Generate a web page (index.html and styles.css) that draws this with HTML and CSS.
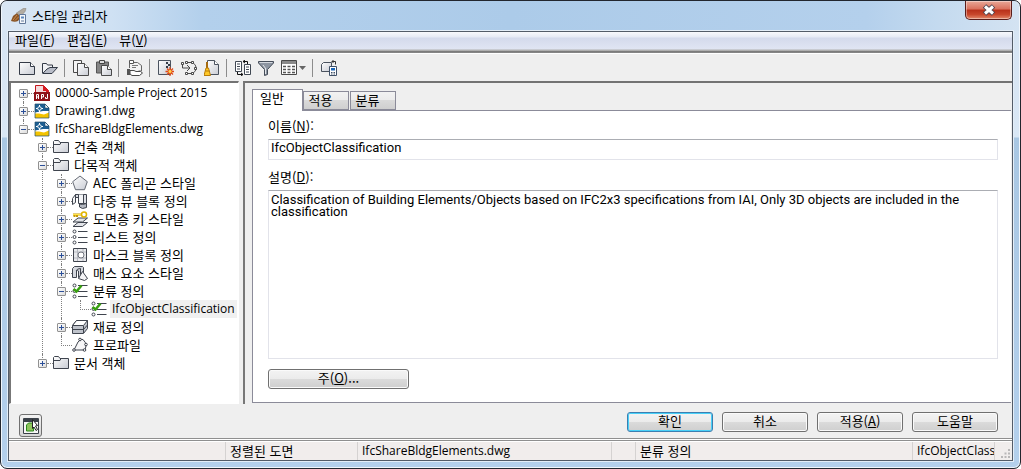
FILE: index.html
```html
<!DOCTYPE html>
<html lang="ko">
<head>
<meta charset="utf-8">
<title>스타일 관리자</title>
<link rel="stylesheet" href="styles.css">
</head>
<body>
<svg class="defs" aria-hidden="true">
  <defs>
    <linearGradient id="paper" x1="0" y1="0" x2="1" y2="1"><stop offset="0" stop-color="#fff"/><stop offset="1" stop-color="#c9ccd4"/></linearGradient>
    <symbol id="i-folder" viewBox="0 0 16 16"><path d="M.5 13.500v-11l1-1h4l1.500 2h8.500v10z" fill="url(#paper)" stroke="#3f444e"/><path d="M1 5.500h6l1-2" fill="none" stroke="#3f444e"/></symbol>
    <symbol id="i-dwg" viewBox="0 0 16 16"><path d="M1 1h10l4 4v10H1z" fill="#f3c300"/><path d="M1 1h10l4 4v5H1z" fill="#1d5f92"/><path d="M1 10.500l4 0 5 1 5-2v-1.500l-6 0-8 1.500z" fill="#fff"/><path d="M11 1l4 4h-4z" fill="#fff" stroke="#1b4568" stroke-width=".6"/><path d="M5.500 2v7M2 5.500h7" stroke="#fff"/><circle cx="5.500" cy="5.500" r="1.800" fill="#1d5f92" stroke="#fff"/><path d="M1 1h10l4 4v10H1z" fill="none" stroke="#26516f" stroke-width=".7"/></symbol>
    <symbol id="i-apj" viewBox="0 0 16 16"><path d="M1.500.500h8l5 5V8h-13z" fill="#f3d9da" stroke="#c4161c"/><path d="M9 0l6 6v2h-3V6H9z" fill="#d71920"/><path d="M0 7h16v9H0z" fill="#8e1218"/><path d="M2.500 14V9.500h2V14M2.500 12h2M7.500 14V9.500h2V12h-2M13.500 9v4.500h-2V12" fill="none" stroke="#fff"/></symbol>
    <symbol id="i-poly" viewBox="0 0 16 16"><path d="M8 1l7.300 5.700-2.800 8h-9L.7 6.700z" fill="url(#paper)" stroke="#666b75"/></symbol>
    <symbol id="i-multi" viewBox="0 0 16 16"><path d="M3.500 1.500h11v9h-4v-6h-7z" fill="#dcdfe5" stroke="#3f444e"/><path d="M3.500 1.500L.5 5.500v6l3-2zM6.500 1.500v9h5v-9" fill="#f4f5f7" stroke="#3f444e"/><path d="M7.500 11v3l3 1.500 4-1v-4l-4 1z" fill="#b4b8c1" stroke="#3f444e"/></symbol>
    <symbol id="i-key" viewBox="0 0 16 16"><path d="M1 15.500l5-4h9.500l-5 4zM1 11l5-4h9.500l-5 4z" fill="#e2e4e8" stroke="#3f444e"/><path d="M1 3.500h9M2.500 4v2M5 4v2" stroke="#c79a00" stroke-width="2"/><path d="M1 3.500h9" stroke="#ffe24a"/><circle cx="12" cy="3.500" r="2.500" fill="#fff" stroke="#e0b400" stroke-width="1.500"/></symbol>
    <symbol id="i-list" viewBox="0 0 16 16"><path d="M6 2.500h9.500M6 8.500h9.500M6 13.500h9.500" stroke="#3f444e"/><g fill="#fff" stroke="#3f444e"><circle cx="2.500" cy="2.500" r="1.500"/><circle cx="2.500" cy="8" r="1.500"/><circle cx="2.500" cy="13.500" r="1.500"/></g></symbol>
    <symbol id="i-mask" viewBox="0 0 16 16"><path d="M1.500 1.500h13v13h-13z" fill="#e8e9ec" stroke="#3f444e"/><path d="M2 5h12M2 11h12M5.500 2v12M11 2v12" stroke="#b7bac1"/><circle cx="9" cy="8" r="3" fill="#fff" stroke="#70747d"/></symbol>
    <symbol id="i-mass" viewBox="0 0 16 16"><path d="M.5 3.500l2-2h8l1 1v5l-3 5H6.500V6Q6 5 4.500 6v6.500h-4z" fill="#d4d7dd" stroke="#3f444e"/><path d="M4 6q1-2.500 4.500-2.500V11" fill="none" stroke="#3f444e"/><path d="M10.500 6.500l5 7-3 2-6-2z" fill="#f4f4f6" stroke="#3f444e"/></symbol>
    <symbol id="i-class" viewBox="0 0 16 16"><use href="#i-list"/><path d="M1.500 6l3 2.500 5-6" fill="none" stroke="#38a010" stroke-width="2.500"/></symbol>
    <symbol id="i-mat" viewBox="0 0 16 16"><path d="M.5 6.500l4-5h11v8l-4 5H.5z" fill="#bfc3cb" stroke="#3f444e"/><path d="M.5 6.500l4-5h11l-4 5z" fill="#fff" stroke="#3f444e"/><path d="M1 10.500h10.500l4-4.500M11.500 7v7" fill="none" stroke="#3f444e"/></symbol>
    <symbol id="i-prof" viewBox="0 0 16 16"><path d="M2 13L6 5q3-4 5-2.500Q14 5 14 9l-1 4z" fill="#f6f6f7" stroke="#3f444e"/><g fill="#fff" stroke="#3f444e"><circle cx="2" cy="13" r="1.300"/><circle cx="8" cy="2.500" r="1.300"/><circle cx="14" cy="7.500" r="1.300"/><circle cx="12.500" cy="13" r="1.300"/></g></symbol>
  </defs>
</svg>

<div class="window">
  <header class="titlebar">
    <svg class="ico" viewBox="0 0 16 16"><path d="M0 13l2-5 4-3 4 4-3 4q-3 1.500-7 0z" fill="#8a5527"/><path d="M2 12l4-5M4 12.500l4-4" stroke="#c98b4e"/><path d="M5.500 5L13 0l2 .5-1 3L10 8z" fill="#b3aca2" stroke="#8a8378" stroke-width=".6"/><path d="M8.500 6.500h6v9h-6z" fill="#f4f7fb" stroke="#62789a"/><path d="M10 8.500h3v2h-3z" fill="#5b86bd"/><path d="M10 13h3" stroke="#62789a"/></svg>
    <h1>스타일 관리자</h1>
    <button class="close" type="button" aria-label="닫기"><svg width="14" height="12" viewBox="0 0 14 12"><path d="M2.500 2l9 8M11.500 2l-9 8" stroke="#4d4450" stroke-width="5"/><path d="M3 2.500l8 7M11 2.500l-8 7" stroke="#fff" stroke-width="3"/></svg></button>
  </header>

  <div class="client">
    <nav class="menubar">
      <button type="button">파일(<u>F</u>)</button>
      <button type="button">편집(<u>E</u>)</button>
      <button type="button">뷰(<u>V</u>)</button>
    </nav>

    <div class="toolbar" role="toolbar">
      <button type="button" aria-label="새 도면"><svg class="ico" viewBox="0 0 16 16"><path d="M.5 2.500h11l4 4v8H.5z" fill="url(#paper)" stroke="#343b47"/><path d="M11.500 2.500v4h4" fill="#fff" stroke="#343b47"/></svg></button>
      <button type="button" aria-label="열기"><svg class="ico" viewBox="0 0 16 16"><path d="M.5 13V3.500h4l1 1.500h5v2.500" fill="#f2f3f5" stroke="#343b47"/><path d="M.7 13.500L5 9l3-1.500h7.500L10 13.500z" fill="#b9bdc8" stroke="#343b47"/></svg></button>
      <i class="sep"></i>
      <button type="button" aria-label="복사"><svg class="ico" viewBox="0 0 16 16"><path d="M.5.500h8v12h-8z" fill="#f5f5f5" stroke="#4a4a4a"/><path d="M4.500 3.500h7l4 4v8h-11z" fill="url(#paper)" stroke="#4a4a4a"/><path d="M11.500 3.500v4h4" fill="#fff" stroke="#4a4a4a"/></svg></button>
      <button type="button" aria-label="붙여넣기"><svg class="ico" viewBox="0 0 16 16"><path d="M.5 2h12v11H.5z" fill="#858585" stroke="#555"/><path d="M3.500.500h5v3h-5z" fill="#ddd" stroke="#444"/><path d="M5.500 5.500h6l4 4v6h-10z" fill="url(#paper)" stroke="#4a4a4a"/><path d="M11.500 5.500v4h4" fill="#fff" stroke="#4a4a4a"/></svg></button>
      <i class="sep"></i>
      <button type="button" aria-label="공유"><svg class="ico" viewBox="0 0 16 16"><path d="M2.500 8V2.500h8l4 3V11h-3" fill="#f2f2f2" stroke="#666"/><path d="M2.500.500h4v3h-4z" fill="#fff" stroke="#555"/><path d="M5 5.500h6M5 7.500h4" stroke="#777"/><path d="M3 10.500h4l2 1h4.500l2 1.500-3 2.500H5L3 14z" fill="#fff" stroke="#4a4a4a"/><path d="M0 9h3v6H0z" fill="#555"/></svg></button>
      <i class="sep"></i>
      <button type="button" aria-label="새 스타일"><svg class="ico" viewBox="0 0 16 16"><path d="M.5.500h12v14H.5z" fill="url(#paper)" stroke="#4b535f"/><path d="M8 2h2v2H8zM10 4h2v2h-2zM8 6h2v2H8z" fill="#333b47"/><path d="M12 7v9M7.500 11.500h9M9 8.500l6 6M15 8.500l-6 6" stroke="#e04a1a" stroke-width="1.300"/><circle cx="12" cy="11.500" r="2" fill="#ffd54a" stroke="#e04a1a" stroke-width=".8"/></svg></button>
      <button type="button" aria-label="스타일 편집"><svg class="ico" viewBox="0 0 16 16"><path d="M5 2.500h5q5 1 5 5.500t-5 5.500H5M1.500 4v4h7M6 5l3 3-3 3" fill="none" stroke="#4a4a4a"/><g fill="#fff" stroke="#4a4a4a"><path d="M4.500 1.500h2v2h-2zM10.500 1.500h2v2h-2zM13.500 7.500h2v2h-2zM10.500 12.500h2v2h-2zM4.500 12.500h2v2h-2zM.5 2.500h2v2h-2z"/></g></svg></button>
      <button type="button" aria-label="소거"><svg class="ico" viewBox="0 0 16 16"><path d="M3.500.500h7l4 4v10h-11z" fill="url(#paper)" stroke="#4b535f"/><path d="M10.500.500v4h4" fill="#fff" stroke="#4b535f"/><path d="M3 2v6" stroke="#a56a10" stroke-width="2"/><path d="M2 8h2.500l2 7.500H0z" fill="#ffc928" stroke="#b87b08"/><path d="M1.500 11h4" stroke="#b87b08"/></svg></button>
      <i class="sep"></i>
      <button type="button" aria-label="비교"><svg class="ico" viewBox="0 0 16 16"><path d="M.5 1.500h6v10h-6zM9.500 4.500h6v10h-6z" fill="#fff" stroke="#3f4752"/><path d="M2 4h3M2 6.500h3M2 9h3M11 7h3M11 9.500h3M11 12h3" stroke="#3f4752"/><path d="M8 1.500h4.500V4M10 0L8 1.500 10 3M2.500 12v2.500H8M6 13l2 1.500L6 16" fill="none" stroke="#111"/></svg></button>
      <button type="button" aria-label="필터"><svg class="ico" viewBox="0 0 16 16"><path d="M.5 1.500h15v1.500l-6 6.500v5l-3 1V9.500L.5 3z" fill="#8d95a1" stroke="#454d59"/><path d="M1.500 2.500h13" stroke="#d5d9df"/><path d="M7.500 8v6M5 5l3 4" stroke="#e3e6ea"/></svg></button>
      <button type="button" class="split" aria-label="보기"><svg class="ico" viewBox="0 0 16 16"><path d="M.5.500h15v14H.5z" fill="#fff" stroke="#4a4a4a"/><path d="M1 1h14v3H1z" fill="#8a8a8a"/><path d="M2 6.500h12M2 9.500h12M2 12.500h12" stroke="#555" stroke-width="1.500" stroke-dasharray="3 1.500"/></svg><svg class="arrow" viewBox="0 0 7 4"><path d="M0 0h7L3.500 4z" fill="#666"/></svg></button>
      <i class="sep"></i>
      <button type="button" aria-label="삽입"><svg class="ico" viewBox="0 0 16 16"><path d="M.5 4.500l2-2h8v9H.5z" fill="url(#paper)" stroke="#4b535f"/><path d="M8.500 6.500h7v9h-7z" fill="#fff" stroke="#3f5068"/><path d="M10 8h4v2.500h-4z" fill="#1a66b8"/><path d="M10 12.500h4M10 14h4" stroke="#3f5068" stroke-dasharray="1 .5"/><path d="M11 1.500h3.500v3M12.500 0L11 1.500 12.500 3" fill="none" stroke="#333"/></svg></button>
    </div>

    <main class="panes">
      <ul class="tree" role="tree">
        <li><div class="row"><button class="exp" type="button" aria-label="펼치기"></button><svg class="ico"><use href="#i-apj"/></svg><span class="label latin">00000-Sample Project 2015</span></div></li>
        <li><div class="row"><button class="exp" type="button" aria-label="펼치기"></button><svg class="ico"><use href="#i-dwg"/></svg><span class="label latin">Drawing1.dwg</span></div></li>
        <li><div class="row"><button class="exp open" type="button" aria-label="접기"></button><svg class="ico"><use href="#i-dwg"/></svg><span class="label latin">IfcShareBldgElements.dwg</span></div>
          <ul>
            <li><div class="row"><button class="exp" type="button" aria-label="펼치기"></button><svg class="ico"><use href="#i-folder"/></svg><span class="label">건축 객체</span></div></li>
            <li><div class="row"><button class="exp open" type="button" aria-label="접기"></button><svg class="ico"><use href="#i-folder"/></svg><span class="label">다목적 객체</span></div>
              <ul>
                <li><div class="row"><button class="exp" type="button" aria-label="펼치기"></button><svg class="ico"><use href="#i-poly"/></svg><span class="label">AEC 폴리곤 스타일</span></div></li>
                <li><div class="row"><button class="exp" type="button" aria-label="펼치기"></button><svg class="ico"><use href="#i-multi"/></svg><span class="label">다중 뷰 블록 정의</span></div></li>
                <li><div class="row"><button class="exp" type="button" aria-label="펼치기"></button><svg class="ico"><use href="#i-key"/></svg><span class="label">도면층 키 스타일</span></div></li>
                <li><div class="row"><button class="exp" type="button" aria-label="펼치기"></button><svg class="ico"><use href="#i-list"/></svg><span class="label">리스트 정의</span></div></li>
                <li><div class="row"><button class="exp" type="button" aria-label="펼치기"></button><svg class="ico"><use href="#i-mask"/></svg><span class="label">마스크 블록 정의</span></div></li>
                <li><div class="row"><button class="exp" type="button" aria-label="펼치기"></button><svg class="ico"><use href="#i-mass"/></svg><span class="label">매스 요소 스타일</span></div></li>
                <li><div class="row"><button class="exp open" type="button" aria-label="접기"></button><svg class="ico"><use href="#i-class"/></svg><span class="label">분류 정의</span></div>
                  <ul>
                    <li><div class="row leaf"><svg class="ico"><use href="#i-class"/></svg><span class="label latin selected">IfcObjectClassification</span></div></li>
                  </ul>
                </li>
                <li><div class="row"><button class="exp" type="button" aria-label="펼치기"></button><svg class="ico"><use href="#i-mat"/></svg><span class="label">재료 정의</span></div></li>
                <li><div class="row leaf"><svg class="ico"><use href="#i-prof"/></svg><span class="label">프로파일</span></div></li>
              </ul>
            </li>
            <li><div class="row"><button class="exp" type="button" aria-label="펼치기"></button><svg class="ico"><use href="#i-folder"/></svg><span class="label">문서 객체</span></div></li>
          </ul>
        </li>
      </ul>

      <section class="detail">
        <div class="tabs" role="tablist">
          <button type="button" role="tab" class="tab active" aria-selected="true">일반</button>
          <button type="button" role="tab" class="tab">적용</button>
          <button type="button" role="tab" class="tab">분류</button>
        </div>
        <div class="page" role="tabpanel">
          <label for="name">이름(<u>N</u>):</label>
          <input id="name" type="text" value="IfcObjectClassification">
          <label for="desc">설명(<u>D</u>):</label>
          <textarea id="desc">Classification of Building Elements/Objects based on IFC2x3 specifications from IAI, Only 3D objects are included in the classification</textarea>
          <button type="button" class="btn notes">주(<u>O</u>)...</button>
        </div>
      </section>
    </main>

    <footer class="actions">
      <button type="button" class="viewer" aria-label="뷰어"><svg class="ico" viewBox="0 0 16 16"><path d="M.5.500h15v15H.5z" fill="#f7f7f5" stroke="#3a4048"/><path d="M1 1h14v3H1z" fill="#3a4048"/><path d="M3.500 7l2-2h5v8h-7z" fill="#8fc45c" stroke="#2b8a1d"/><path d="M9.500 1.500l5 6-2 .5 2 3.500-1.500 1-2-3.500-1.500 1.500z" fill="#fff" stroke="#222"/></svg></button>
      <button type="button" class="btn primary">확인</button>
      <button type="button" class="btn">취소</button>
      <button type="button" class="btn">적용(<u>A</u>)</button>
      <button type="button" class="btn">도움말</button>
    </footer>

    <div class="status">
      <span></span>
      <span>정렬된 도면</span>
      <span class="latin">IfcShareBldgElements.dwg</span>
      <span></span>
      <span>분류 정의</span>
      <span class="latin">IfcObjectClass</span>
      <span><svg class="grip" width="9" height="9" viewBox="0 0 9 9"><path d="M7 0h2v2H7zM7 3.500h2v2H7zM3.500 3.500h2v2h-2zM7 7h2v2H7zM3.500 7h2v2h-2zM0 7h2v2H0z" fill="#b9b7b7"/></svg></span>
    </div>
  </div>
</div>
</body>
</html>
```
FILE: styles.css
```css
* { box-sizing: border-box; }

body {
  margin: 0;
  background: #fff;
  color: #000;
  font: 13px/18px "Noto Sans CJK KR", sans-serif;
}

button, input, textarea { font: inherit; color: inherit; margin: 0; }
button { padding: 0; border: 0; background: none; }
ul { list-style: none; margin: 0; padding: 0; }
.defs { position: absolute; width: 0; height: 0; }
.ico { width: 16px; height: 16px; flex: none; display: block; }
.latin { font-family: "Open Sans", "Noto Sans CJK KR", sans-serif; font-size: 12px; }

.window {
  display: flex;
  flex-direction: column;
  min-height: 100vh;
  padding: 0 7px 7px;
  border: 1px solid #22262e;
  border-radius: 7px;
  background: linear-gradient(#d6e4f3 0, #d9e7f5 136px, #a9c7e3 137px, #b4d0ec 100%);
  box-shadow: inset 0 0 0 1px #f0f6fc;
}

.titlebar {
  display: flex;
  align-items: center;
  gap: 5px;
  height: 30px;
  margin: 0 -6px;
  padding: 0 7px 1px 9px;
  background: linear-gradient(90deg, #d9e6f4 0, #cfe1f3 110px, #b3d0ec 200px, #accbe9 50%, #b4d0ec 85%, #c4daef 92%, #d4e3f2 100%);
  border-radius: 6px 6px 0 0;
}
.titlebar h1 { flex: 1; margin: 0; font: inherit; }
.close {
  align-self: flex-start;
  display: grid;
  place-items: center;
  width: 47px;
  height: 19px;
  border: 1px solid #5a1d1a;
  border-top: 0;
  border-radius: 0 0 5px 5px;
  background: linear-gradient(#e8a898 0, #d9705c 45%, #b8301a 50%, #c8472c 75%, #e38a6c 100%);
  box-shadow: inset 0 0 0 1px rgba(255, 255, 255, .4);
}

.client {
  flex: 1;
  display: flex;
  flex-direction: column;
  border: 1px solid #535c68;
  background: #efefef;
  box-shadow: 0 0 0 1px #e4eef8;
}

.menubar {
  display: flex;
  gap: 12px;
  height: 22px;
  padding: 0 6px 4px;
  border-bottom: 1px solid #fff;
  background: linear-gradient(#f8f9fc 0, #e6eaf5 5px, #d4daec 6px, #e0e5f3 17px, #a9aebb 17px, #e8e8e8 18px, #777 19px, #8a8a8a 21px);
}
.menubar button { line-height: 16px; height: 16px; }

.toolbar { display: flex; align-items: center; height: 27px; padding-left: 6px; }
.toolbar button { display: flex; align-items: center; justify-content: center; width: 23px; height: 24px; }
.toolbar .split { width: 32px; gap: 2px; }
.arrow { width: 7px; height: 4px; flex: none; }
.sep { width: 1px; height: 18px; margin: 0 4px 0 3px; background: #8c8c8c; }

.panes { flex: 1; display: grid; grid-template-columns: 230px 1fr; gap: 4px; }

.tree {
  padding: 1px 0 0 8px;
  background: #fff;
  border: 1px solid #fff;
  border-top: 2px solid #737373;
  border-left: 2px solid #777;
  overflow: hidden;
}
.tree ul { padding-left: 19px; }
.tree li { position: relative; }
.tree li::before {
  content: "";
  position: absolute;
  left: 4px;
  top: 0;
  bottom: 0;
  border-left: 1px dotted #808080;
}
.tree > li:first-child::before { top: 9px; }
.tree li:last-child::before { bottom: auto; height: 10px; }
.row { position: relative; display: flex; align-items: center; height: 18px; white-space: nowrap; }
.row::before { content: ""; flex: none; width: 6px; border-top: 1px dotted #808080; order: 1; }
.row.leaf::before { width: 11px; margin-left: 4px; }
.row .ico { order: 2; }
.label { order: 3; margin-left: 3px; padding: 0 2px; line-height: 16px; }
.selected { background: #f0f0f0; line-height: 18px; }
.exp {
  flex: none;
  width: 9px;
  height: 9px;
  border: 1px solid #919191;
  border-radius: 1px;
  background:
    linear-gradient(#2b4f98, #2b4f98) center / 5px 1px no-repeat,
    linear-gradient(#2b4f98, #2b4f98) center / 1px 5px no-repeat,
    linear-gradient(135deg, #fff, #dcdcdc);
}
.exp.open {
  background:
    linear-gradient(#2b4f98, #2b4f98) center / 5px 1px no-repeat,
    linear-gradient(135deg, #fff, #dcdcdc);
}

.detail {
  display: flex;
  flex-direction: column;
  padding: 6px 1px 1px 7px;
  border-top: 2px solid #737373;
  border-left: 2px solid #777;
}
.tabs { display: flex; align-items: flex-end; height: 21px; }
.tab {
  width: 46px;
  height: 19px;
  margin-right: 1px;
  padding: 0 15px 1px 4px;
  border: 1px solid #8b8b99;
  background: linear-gradient(#f2f2f2 0, #ebebeb 50%, #dadada 50%, #cfcfcf 100%);
  line-height: 16px;
}
.tab.active {
  position: relative;
  width: 51px;
  height: 22px;
  margin: 0 0 -1px;
  padding: 0 18px 5px 7px;
  border-bottom: 0;
  background: #fff;
}
.page {
  flex: 1;
  display: flex;
  flex-direction: column;
  padding: 6px 13px 13px 15px;
  border: 1px solid #8b8b99;
  border-right: 0;
  background: #fff;
}
.page label { line-height: 18px; margin-bottom: 4px; }
.page input, .page textarea {
  width: 100%;
  padding: 0 2px;
  border: 1px solid #e2e3ea;
  border-top-color: #abadb3;
  border-radius: 0;
  background: #fff;
  font: 13px/12px Roboto, "Noto Sans CJK KR", sans-serif;
  outline: 0;
}
.page input { height: 21px; margin-bottom: 8px; padding-bottom: 4px; }
.page textarea { flex: 1; min-height: 169px; padding-top: 3px; margin-bottom: 10px; resize: none; display: block; }

.btn {
  width: 86px;
  height: 20px;
  padding-bottom: 3px;
  border: 1px solid #707070;
  border-radius: 3px;
  background: linear-gradient(#f3f3f3 0, #ebebeb 50%, #dbdbdb 50%, #cfcfcf 100%);
  box-shadow: inset 0 0 0 1px #fafafa;
  line-height: 15px;
}
.btn.notes { width: 141px; }
.btn.primary { border-color: #3c7fb1; box-shadow: inset 0 0 0 1px #48d0f8; }

.actions { display: flex; gap: 9px; height: 34px; padding: 8px 14px 0 10px; }
.viewer {
  display: grid;
  place-items: center;
  width: 23px;
  height: 23px;
  margin: 2px auto 0 0;
  border: 1px solid #707070;
  border-radius: 3px;
  background: linear-gradient(#f3f3f3, #d5d5d5);
}

.status {
  display: grid;
  grid-template-columns: 217px 132px 254px 24px 1fr 82px 17px;
  height: 22px;
  padding-top: 3px;
  border-top: 1px solid #8f8f8f;
  background: linear-gradient(#fff 0, #fff 1px, #8f8f8f 1px, #8f8f8f 2px, #fff 2px, #fff 3px, #f1edec 3px);
}
.status span {
  overflow: hidden;
  padding-left: 4px;
  border-right: 1px solid #d5d2d1;
  line-height: 17px;
  white-space: nowrap;
}
.status span:last-child { border: 0; display: flex; align-items: flex-end; justify-content: flex-end; padding: 0 2px 2px 0; }
```
